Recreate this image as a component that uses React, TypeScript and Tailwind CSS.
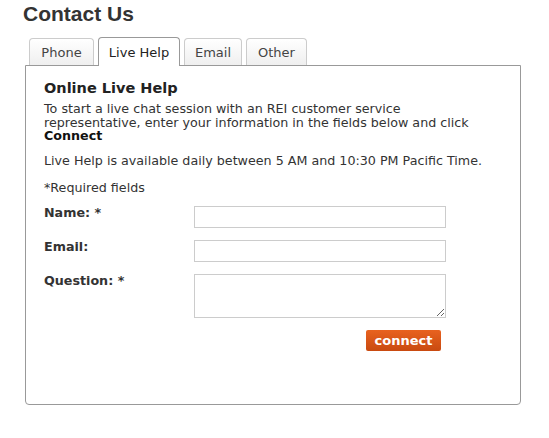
import React from "react";

const tabs = [
  { t: "Phone", w: "w-[65px]" },
  { t: "Live Help", w: "w-[82px]" },
  { t: "Email", w: "w-[58px]" },
  { t: "Other", w: "w-[61px]" },
];

export default function App() {
  return (
    <div className="min-h-[438px] bg-white text-[#333]" style={{ fontFamily: '"DejaVu Sans", Verdana, sans-serif' }}>
      <div className="pl-[23px] pt-[1px]">
        <h1 className="text-[21px] font-bold leading-[26px] text-[#333]" style={{ fontFamily: '"Liberation Sans", Arial, sans-serif' }}>
          Contact Us
        </h1>
      </div>
      <div className="ml-[25px] mt-[10px] w-[496px]">
        <div className="relative z-10 flex gap-[4px] pl-[4px]">
          {tabs.map(({ t, w }) => {
            const active = t === "Live Help";
            return (
              <div
                key={t}
                className={
                  active
                    ? `${w} h-[29px] -mb-px rounded-t-[4px] border border-b-0 border-[#999] bg-white pt-[5px] text-center text-[13px] text-[#222]`
                    : `${w} mt-[1px] h-[27px] rounded-t-[4px] border border-b-0 border-[#ccc] bg-gradient-to-b from-white to-[#efefef] pt-[4px] text-center text-[13px] text-[#444]`
                }
              >
                {t}
              </div>
            );
          })}
        </div>
        <div className="h-[340px] rounded-b-[4px] border border-[#999] px-[18px] pt-[13px] text-[12.7px]">
          <h2 className="text-[14.5px] font-bold leading-[18px] text-[#222]">Online Live Help</h2>
          <p className="mt-[5px] max-w-[440px] leading-[13.5px] text-[#333]">
            To start a live chat session with an REI customer service representative, enter your information in the fields below and click <b className="text-[#111]">Connect</b>
          </p>
          <p className="mt-[11px] leading-[14px]">Live Help is available daily between 5 AM and 10:30 PM Pacific Time.</p>
          <p className="mt-[13px] leading-[14px]">*Required fields</p>
          <div className="mt-[11px] flex flex-col gap-[12px]">
            <div className="flex">
              <label className="w-[150px] font-bold leading-[14px]">Name: *</label>
              <input className="h-[22px] w-[252px] border border-[#ccc]" />
            </div>
            <div className="flex">
              <label className="w-[150px] font-bold leading-[14px]">Email:</label>
              <input className="h-[22px] w-[252px] border border-[#ccc]" />
            </div>
            <div className="flex">
              <label className="w-[150px] font-bold leading-[14px]">Question: *</label>
              <textarea className="block h-[44px] w-[252px] border border-[#ccc]" />
            </div>
          </div>
          <div className="mt-[12px] flex pl-[322px]">
            <button className="h-[21px] w-[75px] rounded-[2px] bg-gradient-to-b from-[#e8621f] to-[#c94a10] text-[13px] font-bold leading-[21px] text-white">
              connect
            </button>
          </div>
        </div>
      </div>
    </div>
  );
}
